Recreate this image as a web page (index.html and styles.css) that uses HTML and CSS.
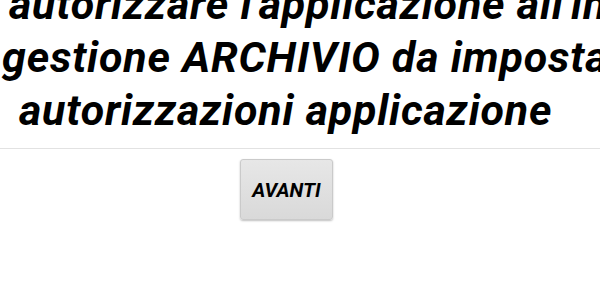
FILE: index.html
```html
<!DOCTYPE html>
<html lang="it">
<head>
<meta charset="utf-8">
<link rel="stylesheet" href="styles.css">
<title>Autorizzazione</title>
</head>
<body>
<div class="screen">
  <div class="message">
    <div class="line line-1">autorizzare l'applicazione all'interno della</div>
    <div class="line line-2">gestione ARCHIVIO da impostazioni</div>
    <div class="line line-3">autorizzazioni applicazione</div>
  </div>
  <div class="divider"></div>
  <div class="actions">
    <button class="btn">AVANTI</button>
  </div>
</div>
</body>
</html>
```
FILE: styles.css
```css
html, body {
  margin: 0;
  padding: 0;
  background: #ffffff;
  overflow: hidden;
}
.screen {
  width: 600px;
  height: 300px;
  overflow: hidden;
  font-family: Roboto, "Liberation Sans", sans-serif;
  color: #000;
}
.message {
  margin-top: -22px;
  font-size: 43px;
  font-weight: 700;
  font-style: italic;
  letter-spacing: 0.8px;
  line-height: 53px;
}
.line {
  white-space: nowrap;
}
.line-1 { padding-left: 9px; }
.line-2 { padding-left: 2px; }
.line-3 { padding-left: 19px; }
.divider {
  margin-top: 11px;
  height: 1px;
  background: #e2e2e2;
}
.actions {
  width: 573px;
  display: flex;
  justify-content: center;
  padding-top: 10px;
}
.btn {
  width: 93px;
  height: 61px;
  border: 1px solid #cacaca;
  border-radius: 3px;
  background: linear-gradient(#e7e7e7, #d9d9d9);
  box-shadow: 0 1px 2px rgba(0,0,0,0.25);
  font-family: Roboto, "Liberation Sans", sans-serif;
  font-size: 20px;
  font-weight: 700;
  font-style: italic;
  color: #000;
  padding: 0;
}
```
